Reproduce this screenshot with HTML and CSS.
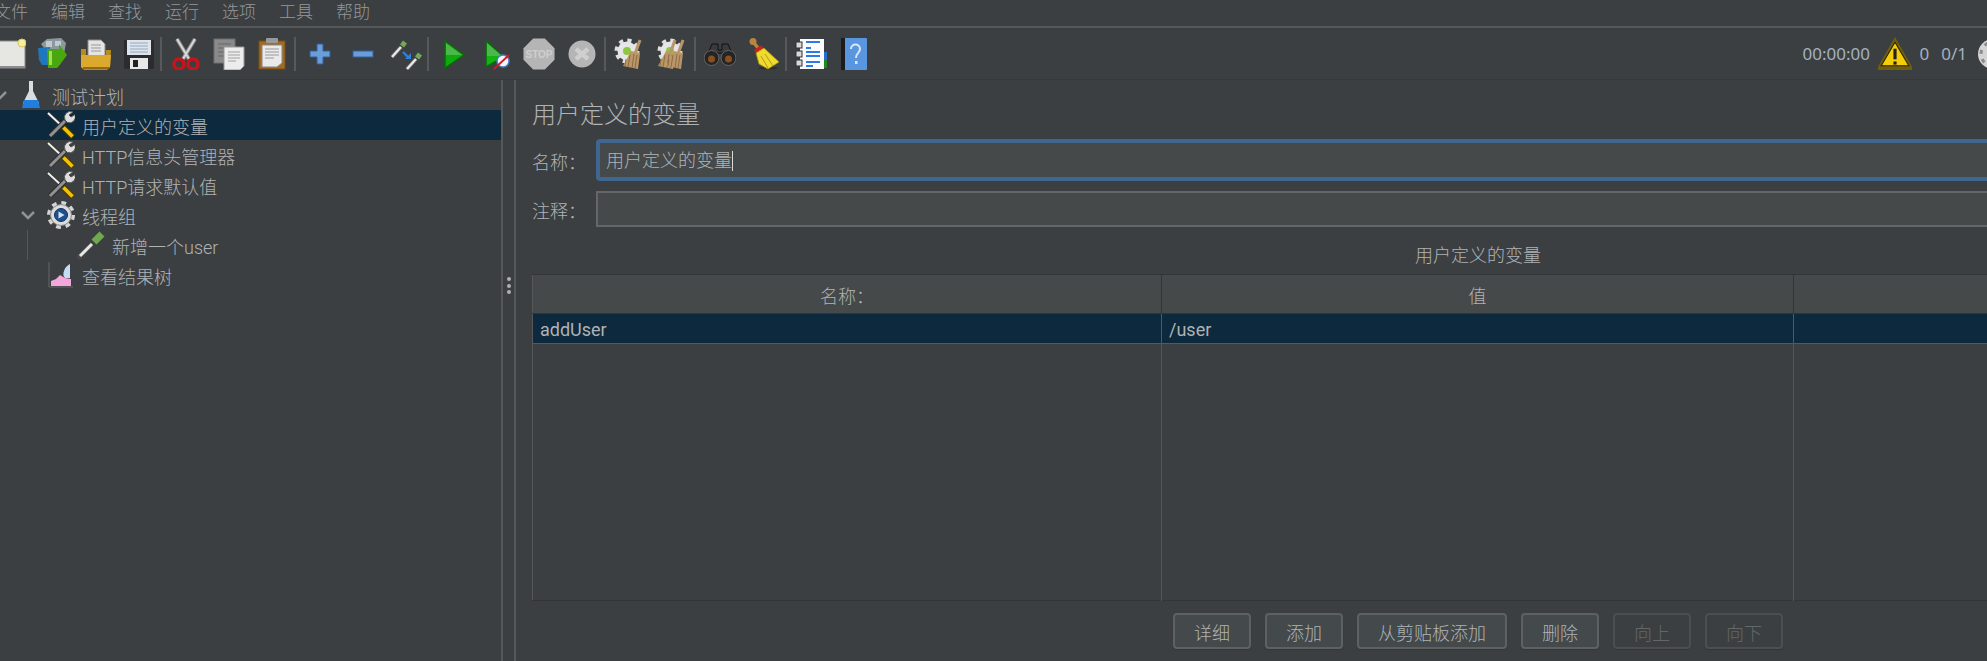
FILE: index.html
```html
<!DOCTYPE html>
<html lang="zh-CN">
<head>
    <meta charset="UTF-8">
    <title>Apache JMeter</title>
    <link rel="stylesheet" href="styles.css">
</head>
<body>
    <svg class="defs" aria-hidden="true">
        <symbol id="i-tools" viewBox="0 0 28 28">
            <path d="M1 2 15 15" stroke="#333" stroke-width="3.600"/>
            <path d="M1 2 15 15" stroke="#eee" stroke-width="2"/>
            <path d="M3 25 18 10" stroke="#2e2e2e" stroke-width="5"/>
            <path d="M3 25 18 10" stroke="#929292" stroke-width="3"/>
            <path d="M26 1a6 6 0 0 0-8 8l2.500 2.500a6 6 0 0 0 7.500-8l-4 2.500-2-2z" fill="#dedede" stroke="#555"/>
            <path d="M16 16 26 26" stroke="#4d3f00" stroke-width="5.600"/>
            <path d="M16.500 16.500 25.500 25.500" stroke="#f4c20d" stroke-width="3.600"/>
        </symbol>
        <symbol id="i-gear" viewBox="0 0 28 28">
            <circle cx="14" cy="14" r="11.500" fill="none" stroke="#d4d4d4" stroke-width="5" stroke-dasharray="4.500 4.530"/>
            <circle cx="14" cy="14" r="10.500" fill="#dcdcdc" stroke="#8a8a8a"/>
            <circle cx="14" cy="14" r="6.500" fill="#1e4f8f" stroke="#12335e"/>
            <path d="M11.500 10.500v7l6-3.500z" fill="#d5e2f2"/>
        </symbol>
        <symbol id="i-smallgear" viewBox="0 0 32 32">
            <circle cx="13" cy="13" r="10.500" fill="none" stroke="#e0e0e0" stroke-width="4" stroke-dasharray="4.100 4.150"/>
            <circle cx="13" cy="13" r="9.500" fill="#e6e6e6"/>
            <circle cx="13" cy="13" r="4" fill="#8dc63f"/>
        </symbol>
        <symbol id="i-brush" viewBox="0 0 32 32">
            <path d="M24 2 19 16" stroke="#b8966a" stroke-width="3"/>
            <path d="M15 13 24 15 22 31 7 28z" fill="#bb9768"/>
            <path d="M14 17 12 29M18 16 16 30M21 17 19 30M10 21 9 28" stroke="#8a6c47"/>
        </symbol>
    </svg>

    <nav class="menubar">
        <span>文件</span><span>编辑</span><span>查找</span><span>运行</span><span>选项</span><span>工具</span><span>帮助</span>
    </nav>

    <div class="toolbar">
        <svg class="tool" viewBox="0 0 32 32"><rect x="1" y="3" width="30" height="27" fill="#e6e6e2" stroke="#8b8b8b"/><rect x="1" y="28" width="30" height="2" fill="#8c8c8c"/><circle cx="28" cy="5" r="4" fill="#f7efa0" stroke="#d9c65c"/></svg>
        <svg class="tool" viewBox="0 0 32 32"><path d="M4 6 10 1 24 0 29 5 27 16 10 14z" fill="#8c989f"/><path d="M9 3h6v6H9zM18 3h6v5h-6z" fill="#c3cace"/><path d="M1 10 13 9 14 27 5 27 2 22z" fill="#1f77bd"/><path d="M10 11 22 11 22 6 30 17 22 28 20 30H11z" fill="#4aa80f"/><path d="M12 13h3v14h-3z" fill="#a5dc55"/></svg>
        <svg class="tool" viewBox="0 0 32 32"><path d="M8 2h13l4 4v12H8z" fill="#e4e4e4" stroke="#8d8d8d"/><path d="M11 7h10M11 10h10M11 13h10" stroke="#999"/><path d="M1 11h5v6h20v-5h5l-1 17-3 3H4l-3-3z" fill="#b98a1e"/><path d="M1 17h30l-1 12-3 2H4l-3-2z" fill="#dba92d"/><path d="M3 29h26v2H3z" fill="#96690f"/></svg>
        <svg class="tool" viewBox="0 0 32 32"><rect x="1" y="2" width="30" height="29" rx="1" fill="#2c2c2e"/><rect x="4" y="2" width="24" height="15" fill="#dfe4ea"/><path d="M7 5h18M7 8h18M7 11h18M7 14h18" stroke="#8fa9c9"/><rect x="7" y="20" width="18" height="11" fill="#e8e8e8"/><rect x="10" y="22" width="5" height="7" fill="#222"/></svg>
        <i class="sep"></i>
        <svg class="tool" viewBox="0 0 32 32"><path d="M7 1 19 21M25 1 13 21" stroke="#888" stroke-width="4"/><path d="M7 1 19 21M25 1 13 21" stroke="#d8d8d8" stroke-width="2"/><circle cx="9" cy="26" r="5" fill="none" stroke="#c5141a" stroke-width="3.500"/><circle cx="23" cy="26" r="5" fill="none" stroke="#c5141a" stroke-width="3.500"/></svg>
        <svg class="tool" viewBox="0 0 32 32"><rect x="1" y="1" width="21" height="24" fill="#8a8a8a" stroke="#6f6f6f"/><path d="M5 6h13M5 10h13M5 14h13M5 18h13" stroke="#666"/><path d="M11 9h20v19l-4 4H11z" fill="#ececec" stroke="#999"/><path d="M15 14h12M15 17h12M15 20h12M15 23h8" stroke="#a0a0a0"/></svg>
        <svg class="tool" viewBox="0 0 32 32"><rect x="3" y="3" width="26" height="28" fill="#a26b22" stroke="#7b4e12"/><rect x="10" y="0" width="12" height="5" rx="1" fill="#9a9a9a"/><path d="M6 7h20v18l-5 4H6z" fill="#eaeaea" stroke="#888"/><path d="M9 11h14M9 14h14M9 17h14M9 20h9" stroke="#999"/></svg>
        <i class="sep"></i>
        <svg class="tool" viewBox="0 0 32 32"><path d="M13 6h6v7h7v6h-7v7h-6v-7H6v-6h7z" fill="#6a9edb" stroke="#335f9a"/></svg>
        <svg class="tool" viewBox="0 0 32 32"><rect x="6" y="13" width="20" height="6" fill="#6a9edb" stroke="#335f9a"/></svg>
        <svg class="tool" viewBox="0 0 32 32"><path d="M2 19 11 9" stroke="#666" stroke-width="4"/><path d="M2 19 11 9" stroke="#e8e8e8" stroke-width="2.400"/><path d="M12 8 15 4" stroke="#74a857" stroke-width="5"/><path d="M17 31 26 21" stroke="#666" stroke-width="4"/><path d="M17 31 26 21" stroke="#e8e8e8" stroke-width="2.400"/><path d="M27 20 30 16" stroke="#74a857" stroke-width="5"/><path d="M13 14 19 20" stroke="#2f7fe0" stroke-width="2.400"/><path d="M15 21h6v-6z" fill="#2f7fe0"/></svg>
        <i class="sep"></i>
        <svg class="tool" viewBox="0 0 32 32"><path d="M8 3 27 17 8 30z" fill="#0eab0e" stroke="#0a6b0a" stroke-width="1.500"/><path d="M9 5 25 17H9z" fill="#4cb84c"/></svg>
        <svg class="tool" viewBox="0 0 32 32"><path d="M6 3 24 19 6 29z" fill="#12b312" stroke="#0a6b0a" stroke-width="1.500"/><path d="M7 5 22 18H7z" fill="#4cb84c"/><circle cx="23" cy="23" r="6" fill="#f2f6fa" stroke="#4d7fc0" stroke-width="1.500"/><path d="M14 31 29 17" stroke="#d21b24" stroke-width="1.800"/></svg>
        <svg class="tool" viewBox="0 0 32 32"><path d="M10 0h12l10 10v12L22 32H10L0 22V10z" fill="#b5b5b5" transform="translate(0.500 0.500) scale(.97)"/><text class="stop-text" x="16" y="20">STOP</text></svg>
        <svg class="tool" viewBox="0 0 32 32"><circle cx="16" cy="16" r="13.500" fill="#b5b5b5"/><path d="M10 11 22 21M22 11 10 21" stroke="#cfcfcf" stroke-width="4.500"/></svg>
        <i class="sep"></i>
        <svg class="tool" viewBox="0 0 32 32"><use href="#i-smallgear"/><use href="#i-brush" x="2"/></svg>
        <svg class="tool" viewBox="0 0 32 32"><use href="#i-smallgear" x="0"/><use href="#i-brush" x="-6"/><use href="#i-brush" x="2"/></svg>
        <i class="sep"></i>
        <svg class="tool" viewBox="0 0 32 32"><path d="M8 6h6v6h4V6h6l3 7-8 2h-6l-8-2z" fill="#3a3a3a" stroke="#111"/><circle cx="7.500" cy="20" r="7.500" fill="#242424" stroke="#666"/><circle cx="24.500" cy="20" r="7.500" fill="#242424" stroke="#666"/><circle cx="7.500" cy="21" r="3.500" fill="#8a4f1d"/><circle cx="24.500" cy="21" r="3.500" fill="#8a4f1d"/></svg>
        <svg class="tool" viewBox="0 0 32 32"><ellipse cx="21" cy="30" rx="10" ry="1.500" fill="#2e2e2e"/><circle cx="6" cy="3.500" r="3.500" fill="#b9853c"/><path d="M7 5 12 11" stroke="#b9853c" stroke-width="3.500"/><path d="M7 12 14 7 17 11 10 16z" fill="#c8201e"/><path d="M9 15 17 10 32 24 21 31 12 26z" fill="#efdb2e" stroke="#a98f16" stroke-width=".8"/><path d="M14 18 21 30M18 16 26 28" stroke="#b49a1a"/></svg>
        <i class="sep"></i>
        <svg class="tool" viewBox="0 0 32 32"><path d="M27 14h5v8h-5z" fill="#2a6dd0"/><path d="M27 22h5v8h-5z" fill="#1f8a1f"/><rect x="5" y="1" width="24" height="30" fill="#fbfbfb"/><path d="M11 4h14M11 10h5M11 14h14M11 18h14M11 24h14M11 28h7" stroke="#2a7ae8" stroke-width="2"/><rect x="1" y="4" width="6" height="6" fill="#d8d8d8" stroke="#333"/><rect x="1" y="13" width="6" height="6" fill="#d8d8d8" stroke="#333"/><rect x="1" y="22" width="6" height="6" fill="#d8d8d8" stroke="#333"/></svg>
        <svg class="tool" viewBox="0 0 32 32"><rect x="3" y="0" width="26" height="32" rx="1" fill="#5a96e0"/><rect x="3" y="0" width="4" height="32" fill="#1c1c1c"/><path d="M13 11c0-6 9-6 9 0 0 4-4 4-4 9" fill="none" stroke="#d8e6f6" stroke-width="2"/><rect x="17" y="23" width="2.500" height="3" fill="#d8e6f6"/></svg>

        <div class="status">
            <span class="timer">00:00:00</span>
            <svg class="warn" viewBox="0 0 32 32"><path d="M16 0 32 28v3H0v-3z" fill="#6f5d10"/><path d="M16 5 29 27H3z" fill="#f4cd09" stroke="#2a2500"/><rect x="14.500" y="11" width="3" height="10" fill="#222"/><rect x="14.500" y="23" width="3" height="3" fill="#222"/></svg>
            <span class="count">0</span>
            <span class="count">0/1</span>
            <svg class="status-gear" viewBox="0 0 32 32"><circle cx="16" cy="16" r="15" fill="#d5d5d5"/><circle cx="16" cy="16" r="12" fill="none" stroke="#8c8c8c" stroke-width="3" stroke-dasharray="4 5.400"/><circle cx="16" cy="16" r="6" fill="#e4e4e4"/></svg>
        </div>
    </div>

    <main class="workspace">
        <aside class="tree">
            <div class="row">
                <svg class="twisty root" viewBox="0 0 14 14"><path d="M1 4 7 10 13 4"/></svg>
                <svg class="node" viewBox="0 0 28 28"><path d="M12 0h4v10l6 12v5H6v-5l6-12z" fill="#d8dde2"/><path d="M7 19h14l2 8H5z" fill="#1f7fe0"/></svg>
                <span>测试计划</span>
            </div>
            <div class="row lvl1 selected">
                <svg class="node"><use href="#i-tools"/></svg>
                <span>用户定义的变量</span>
            </div>
            <div class="row lvl1">
                <svg class="node"><use href="#i-tools"/></svg>
                <span>HTTP信息头管理器</span>
            </div>
            <div class="row lvl1">
                <svg class="node"><use href="#i-tools"/></svg>
                <span>HTTP请求默认值</span>
            </div>
            <div class="row branch">
                <svg class="twisty" viewBox="0 0 14 14"><path d="M1 4 7 10 13 4"/></svg>
                <svg class="node"><use href="#i-gear"/></svg>
                <span>线程组</span>
            </div>
            <div class="row lvl2 guide">
                <svg class="node" viewBox="0 0 28 28"><path d="M1 27 15 13" stroke="#4a4a4a" stroke-width="5"/><path d="M3 25 15 13" stroke="#e8e8e8" stroke-width="3"/><path d="M17 11 25 3" stroke="#6ea84f" stroke-width="7"/></svg>
                <span>新增一个user</span>
            </div>
            <div class="row lvl1">
                <svg class="node" viewBox="0 0 28 28"><path d="M2 1v25h24" fill="none" stroke="#666"/><path d="M4 25v-5l5-2 4-4 5 3 6 1v7z" fill="#f3a6da"/><path d="M17 10c1-4 4-6 6-7v14h-5c-2-2-2-4-1-7z" fill="#c4dcf5"/></svg>
                <span>查看结果树</span>
            </div>
        </aside>

        <div class="splitter"><i></i><i></i><i></i></div>

        <section class="editor">
            <h2 class="title">用户定义的变量</h2>
            <div class="field">
                <label>名称：</label>
                <div class="input focus"><span class="caret">用户定义的变量</span></div>
            </div>
            <div class="field comment">
                <label>注释：</label>
                <div class="input"></div>
            </div>
            <div class="caption">用户定义的变量</div>
            <table class="vars">
                <colgroup><col class="col-a"><col class="col-b"><col></colgroup>
                <thead>
                    <tr><th>名称：</th><th>值</th><th></th></tr>
                </thead>
                <tbody>
                    <tr class="active"><td>addUser</td><td>/user</td><td></td></tr>
                    <tr class="filler"><td></td><td></td><td></td></tr>
                </tbody>
            </table>
            <div class="buttons">
                <button>详细</button>
                <button>添加</button>
                <button>从剪贴板添加</button>
                <button>删除</button>
                <button disabled>向上</button>
                <button disabled>向下</button>
            </div>
        </section>
    </main>
</body>
</html>
```

FILE: styles.css
```css
* {
    margin: 0;
    padding: 0;
    box-sizing: border-box;
}
html, body {
    height: 661px;
    overflow: hidden;
}
body {
    background-color: #3c3f41;
    color: #b0b3b5;
    font-family: Roboto, "Noto Sans CJK SC", sans-serif;
    font-size: 18px;
    font-weight: 300;
    width: 1987px;
}
.defs {
    position: absolute;
    width: 0;
    height: 0;
}
svg path {
    fill-rule: evenodd;
}

.menubar {
    display: flex;
    gap: 23px;
    height: 28px;
    margin-left: -6px;
    border-bottom: 2px solid #555759;
    font-size: 17px;
    line-height: 24px;
    color: #94989b;
}

.toolbar {
    display: flex;
    align-items: center;
    height: 52px;
    margin-left: -12px;
    border-bottom: 1px solid #36383a;
}
.tool {
    width: 32px;
    height: 32px;
    margin: 0 5.500px;
    flex: none;
}
.sep {
    width: 4.500px;
    height: 34px;
    flex: none;
    border-left: 2px solid #565859;
}
.stop-text {
    font-family: "Liberation Sans", sans-serif;
    font-size: 10px;
    font-weight: bold;
    fill: #cfcfcf;
    text-anchor: middle;
}
.status {
    display: flex;
    align-items: center;
    margin-left: auto;
    margin-right: -22px;
    color: #a3b1bf;
    font-family: "Noto Sans", sans-serif;
    font-size: 17px;
    font-weight: 400;
}
.timer {
    margin-right: 8px;
}
.warn {
    width: 34px;
    height: 34px;
    margin-right: 7.500px;
}
.count {
    margin-right: 12px;
}
.status-gear {
    width: 32px;
    height: 32px;
    margin-left: -2px;
}

.workspace {
    display: flex;
    height: 581px;
}
.tree {
    width: 501px;
    flex: none;
}
.row {
    display: flex;
    align-items: center;
    height: 30px;
    white-space: nowrap;
}
.row span {
    margin-left: 7px;
    padding-top: 2px;
}
.row.lvl1 {
    padding-left: 47px;
}
.row.lvl2 {
    padding-left: 77px;
}
.row.branch {
    padding-left: 21px;
}
.row.guide {
    background: linear-gradient(#555759, #555759) 27px 0 / 1px 100% no-repeat;
}
.row.selected {
    background-color: #0d293e;
}
.node {
    width: 28px;
    height: 28px;
    flex: none;
}
.twisty {
    width: 14px;
    height: 14px;
    flex: none;
    margin-right: 12px;
}
.twisty path {
    fill: none;
    stroke: #8f9396;
    stroke-width: 2.500;
}
.twisty.root {
    margin-left: -7px;
    margin-right: 10px;
}

.splitter {
    display: flex;
    flex-direction: column;
    align-items: center;
    justify-content: center;
    gap: 2.500px;
    width: 15px;
    flex: none;
    padding-bottom: 170px;
    border-left: 2px solid #555759;
    border-right: 2px solid #555759;
}
.splitter i {
    width: 4px;
    height: 4px;
    border-radius: 50%;
    background-color: #b0b0b0;
}

.editor {
    width: 1908px;
    flex: none;
    padding: 20px 0 0 16px;
}
.title {
    font-size: 24px;
    font-weight: 300;
    line-height: 30px;
}
.field {
    display: flex;
    align-items: center;
    margin-top: 9px;
}
.field label {
    width: 64px;
    flex: none;
    padding-top: 2px;
}
.input {
    flex: 1;
    height: 42px;
    padding: 0 7px;
    border: 2px solid #646668;
    background-color: #45494a;
    line-height: 36px;
}
.input.focus {
    border: 4px solid #3f6690;
    border-radius: 4px;
    padding: 2px 6px 0;
    line-height: 32px;
}
.caret {
    border-right: 1px solid #d8d8d8;
    display: inline-block;
    line-height: 20px;
}
.field.comment {
    margin-top: 10px;
}
.field.comment .input {
    height: 36px;
}
.caption {
    margin-top: 14px;
    height: 33px;
    line-height: 30px;
    text-align: center;
}

.vars {
    width: 1892px;
    height: 327px;
    table-layout: fixed;
    border-collapse: collapse;
    border-left: 1px solid #555759;
    border-top: 1px solid #323435;
    border-bottom: 1px solid #323435;
}
.col-a {
    width: 629px;
}
.col-b {
    width: 632px;
}
.vars th {
    height: 39px;
    padding-top: 2px;
    font-weight: 300;
    background-color: #45494a;
    border-right: 1px solid #323435;
    border-bottom: 1px solid #323435;
}
.vars td {
    padding: 1px 0 0 7px;
    border-right: 1px solid #555759;
    font-weight: 400;
}
.vars .active td {
    height: 30px;
    background-color: #0d293e;
    border-bottom: 1px solid #555759;
}

.buttons {
    display: flex;
    justify-content: center;
    gap: 14px;
    margin-top: 12px;
}
.buttons button {
    min-width: 78px;
    height: 36px;
    padding: 2px 19px 0;
    border: 2px solid #5e6162;
    border-radius: 4px;
    background-color: #44494b;
    box-shadow: 0 1px 1px #343638;
    color: #b0b3b5;
    font: inherit;
}
.buttons button:disabled {
    background-color: transparent;
    border-color: #4c4f51;
    color: #63676a;
}
```
